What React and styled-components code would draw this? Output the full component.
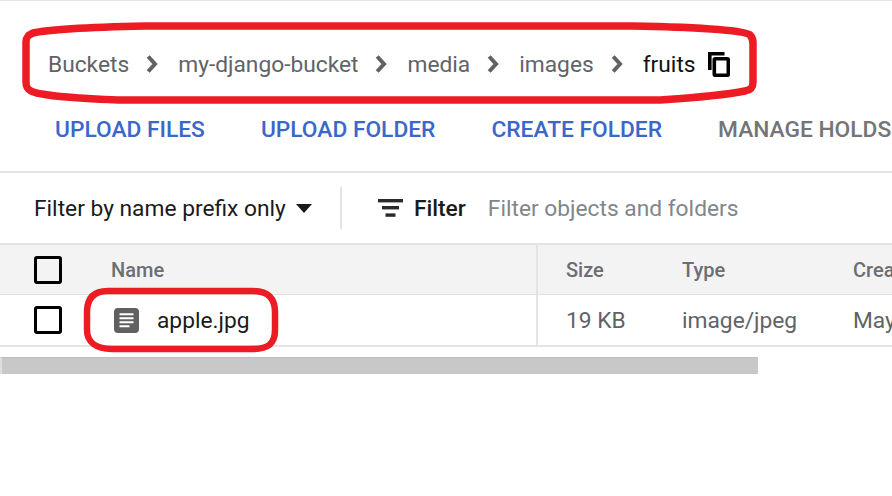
import React from "react";
import styled, { createGlobalStyle } from "styled-components";

const GlobalStyle = createGlobalStyle`
  html, body {
    margin: 0;
    padding: 0;
    background: #fff;
  }
  body {
    font-family: Roboto, "Liberation Sans", sans-serif;
    overflow: hidden;
  }
`;

const Page = styled.div`
  position: relative;
  width: 892px;
  height: 496px;
  overflow: hidden;
  background: #fff;
  border-top: 1px solid #e4e4e4;
  box-sizing: border-box;
`;

const Breadcrumbs = styled.nav`
  display: flex;
  align-items: center;
  height: 126px;
  padding-left: 48px;
  white-space: nowrap;
`;

const Crumb = styled.span`
  font-size: 22.75px;
  color: ${(p) => (p.$current ? "#111" : "#5f6368")};
`;

const Chevron = styled.svg`
  flex: none;
  width: 13px;
  height: 18px;
  margin: 0 19px 0 17px;
  fill: none;
  stroke: #5f6368;
  stroke-width: 4;
`;

const CopyIcon = styled.svg`
  flex: none;
  width: 22px;
  height: 25px;
  margin-left: 12px;
  fill: none;
  stroke: #000;
  stroke-width: 3.6;
`;

const Toolbar = styled.div`
  display: flex;
  align-items: flex-start;
  gap: 56px;
  height: 44px;
  padding-left: 55px;
  border-bottom: 2px solid #e4e4e4;
  white-space: nowrap;
`;

const ToolButton = styled.span`
  font-size: 22.75px;
  font-weight: 500;
  line-height: 5px;
  color: ${(p) => (p.$disabled ? "#757575" : "#3b67c9")};
`;

const FilterBar = styled.div`
  display: flex;
  align-items: center;
  height: 70px;
  padding-left: 34px;
  white-space: nowrap;
`;

const PrefixLabel = styled.span`
  font-size: 22.75px;
  color: #1a1a1a;
`;

const Caret = styled.span`
  flex: none;
  width: 0;
  height: 0;
  margin-left: 10px;
  border-left: 8.5px solid transparent;
  border-right: 8.5px solid transparent;
  border-top: 9px solid #1a1a1a;
`;

const Separator = styled.span`
  flex: none;
  width: 2px;
  height: 42px;
  margin: 0 36px 0 28px;
  background: #e4e4e4;
`;

const FilterIcon = styled.svg`
  flex: none;
  width: 25px;
  height: 18px;
  fill: #2a2a2a;
`;

const FilterLabel = styled.span`
  margin-left: 11px;
  font-size: 22.75px;
  font-weight: 500;
  color: #1a1a1a;
`;

const FilterHint = styled.span`
  margin-left: 22px;
  font-size: 22.75px;
  color: #80868b;
`;

const Table = styled.div`
  display: grid;
  grid-template-columns: 536px 146px 171px 200px;
  width: 1053px;
`;

const HeadCell = styled.div`
  display: flex;
  align-items: center;
  height: 49px;
  background: #f3f3f3;
  border-top: 2px solid #e4e4e4;
  border-bottom: 1px solid #e0e0e0;
  font-size: 20px;
  font-weight: 500;
  color: #6b6e72;
  white-space: nowrap;
  padding-left: ${(p) => p.$indent || 0}px;
  ${(p) => p.$divided && "border-left: 2px solid #e4e4e4; padding-left: 28px;"}
`;

const BodyCell = styled.div`
  display: flex;
  align-items: center;
  height: 50px;
  border-bottom: 2px solid #e4e4e4;
  font-size: 22.75px;
  color: #5f6368;
  white-space: nowrap;
  padding-left: ${(p) => p.$indent || 0}px;
  ${(p) => p.$divided && "border-left: 2px solid #e4e4e4; padding-left: 28px;"}
`;

const Checkbox = styled.span`
  flex: none;
  box-sizing: border-box;
  width: 28px;
  height: 28px;
  margin-right: 49px;
  border: 3px solid #000;
  border-radius: 3px;
`;

const DocIcon = styled.svg`
  flex: none;
  width: 25px;
  height: 25px;
  margin: 0 18px 0 3px;
`;

const FileName = styled.span`
  color: #1a1a1a;
`;

const ScrollTrack = styled.div`
  margin-top: 10px;
  width: 758px;
  height: 17px;
  box-sizing: border-box;
  background: #c8c8c8;
  border-top: 1px solid #bcbcbc;
  border-left: 2px solid #dedede;
`;

const Annotations = styled.svg`
  position: absolute;
  left: 0;
  top: -1px;
  width: 892px;
  height: 496px;
  fill: none;
  stroke: #ed1c24;
  stroke-width: 7.5;
  pointer-events: none;
`;

const ChevronGlyph = () => (
  <Chevron viewBox="0 0 13 18">
    <polyline points="2.2,1.5 9,9 2.2,16.5" />
  </Chevron>
);

export default function App() {
  return (
    <Page>
      <GlobalStyle />
      <Breadcrumbs>
        <Crumb>Buckets</Crumb>
        <ChevronGlyph />
        <Crumb>my-django-bucket</Crumb>
        <ChevronGlyph />
        <Crumb>media</Crumb>
        <ChevronGlyph />
        <Crumb>images</Crumb>
        <ChevronGlyph />
        <Crumb $current>fruits</Crumb>
        <CopyIcon viewBox="0 0 22 25">
          <path d="M16.5 1.8H1.8V18" />
          <rect x="6.3" y="6.8" width="14" height="16.4" rx="1" />
        </CopyIcon>
      </Breadcrumbs>
      <Toolbar>
        <ToolButton>UPLOAD FILES</ToolButton>
        <ToolButton>UPLOAD FOLDER</ToolButton>
        <ToolButton>CREATE FOLDER</ToolButton>
        <ToolButton $disabled>MANAGE HOLDS</ToolButton>
      </Toolbar>
      <FilterBar>
        <PrefixLabel>Filter by name prefix only</PrefixLabel>
        <Caret />
        <Separator />
        <FilterIcon viewBox="0 0 25 18">
          <rect width="25" height="3.4" />
          <rect x="4" y="7" width="17" height="3.4" />
          <rect x="7.5" y="14.4" width="10" height="3.4" />
        </FilterIcon>
        <FilterLabel>Filter</FilterLabel>
        <FilterHint>Filter objects and folders</FilterHint>
      </FilterBar>
      <Table>
        <HeadCell $indent={34}>
          <Checkbox />
          Name
        </HeadCell>
        <HeadCell $divided>Size</HeadCell>
        <HeadCell>Type</HeadCell>
        <HeadCell>Created</HeadCell>
        <BodyCell $indent={34}>
          <Checkbox />
          <DocIcon viewBox="0 0 25 25">
            <rect width="25" height="25" rx="4" fill="#606060" />
            <path d="M5.5 6.2h14M5.5 10.2h14M5.5 14.2h14M5.5 18.2h10" stroke="#fff" strokeWidth="2" />
          </DocIcon>
          <FileName>apple.jpg</FileName>
        </BodyCell>
        <BodyCell $divided>19 KB</BodyCell>
        <BodyCell>image/jpeg</BodyCell>
        <BodyCell>May 5, 2021</BodyCell>
      </Table>
      <ScrollTrack />
      <Annotations viewBox="0 0 892 496">
        <path d="M145 26 L632 26 C690 27 745 30 750 35 C753 38 753 40 753 44 L753 82 C753 88 751 90 745 91 C720 96 690 98 660 100 L118 100 C90 99 40 96 31 91 C27 89 26 87 26 82 L26 42 C26 37 28 35 33 33 C50 29 100 27 145 26 Z" />
        <path strokeWidth="6.5" d="M108 291 L252 291 C268 291 275 298 275 312 L275 330 C275 344 268 349 252 349 L112 349 C96 349 87 342 87 330 L87 312 C87 298 94 291 108 291 Z" />
      </Annotations>
    </Page>
  );
}
